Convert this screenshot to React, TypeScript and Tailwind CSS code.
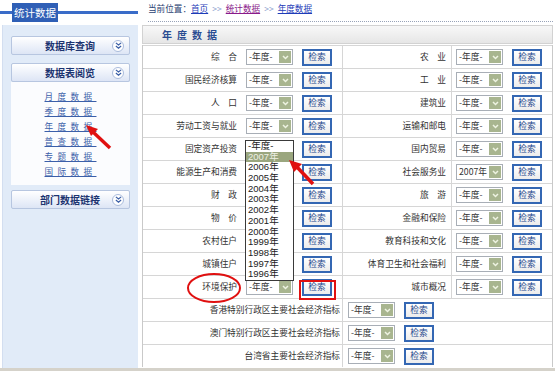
import React from 'react';

const CJK = { fontFamily: '"Noto Sans CJK SC", "Liberation Sans", sans-serif' };

type Row = { label: string; value?: string };

const LEFT: Row[] = [
  { label: '综　合' },
  { label: '国民经济核算' },
  { label: '人　口' },
  { label: '劳动工资与就业' },
  { label: '固定资产投资' },
  { label: '能源生产和消费' },
  { label: '财　政' },
  { label: '物　价' },
  { label: '农村住户' },
  { label: '城镇住户' },
  { label: '环境保护' },
];

const RIGHT: Row[] = [
  { label: '农　业' },
  { label: '工　业' },
  { label: '建筑业' },
  { label: '运输和邮电' },
  { label: '国内贸易' },
  { label: '社会服务业', value: '2007年' },
  { label: '旅　游' },
  { label: '金融和保险' },
  { label: '教育科技和文化' },
  { label: '体育卫生和社会福利' },
  { label: '城市概况' },
];

const WIDE = ['香港特别行政区主要社会经济指标', '澳门特别行政区主要社会经济指标', '台湾省主要社会经济指标'];

const YEARS = ['-年度-', '2007年', '2006年', '2005年', '2004年', '2003年', '2002年', '2001年', '2000年', '1999年', '1998年', '1997年', '1996年'];

const LINKS = ['月度数据', '季度数据', '年度数据', '普查数据', '专题数据', '国际数据'];

function Chevrons() {
  return (
    <span className="flex h-[12px] w-[12px] items-center justify-center rounded-full border border-[#a9bbdc] bg-white">
      <svg width="7" height="7" viewBox="0 0 8 8" fill="none" stroke="#3a5ea6" strokeWidth="1.4">
        <path d="M1 1l3 2.5L7 1" />
        <path d="M1 4.5l3 2.5L7 4.5" />
      </svg>
    </span>
  );
}

function SideBox({ title }: { title: string }) {
  return (
    <div className="flex h-[19px] items-center rounded-[2px] border border-[#b7c6e0] bg-gradient-to-b from-white to-[#dde5f5]">
      <span className="ml-[4px] w-[12px]" />
      <span className="flex-1 text-center text-[10px] font-bold text-[#1c3470]">{title}</span>
      <span className="mr-[5px]">
        <Chevrons />
      </span>
    </div>
  );
}

function YearSelect({ value = '-年度-', hidden }: { value?: string; hidden?: boolean }) {
  return (
    <div className={`flex h-[16px] w-[47px] items-center border border-[#a8aeb6] bg-white ${hidden ? 'invisible' : ''}`}>
      <span className="flex-1 pl-[2px] text-[8.7px] leading-none text-[#333]">{value}</span>
      <span className="mr-[1px] flex h-[12px] w-[12px] items-center justify-center bg-[#a8b58f]">
        <svg width="7" height="5" viewBox="0 0 7 5" fill="none" stroke="#eef3e2" strokeWidth="1.5">
          <path d="M1 1l2.5 2.5L6 1" />
        </svg>
      </span>
    </div>
  );
}

function SearchButton() {
  return (
    <div className="flex h-[17px] w-[30px] items-center justify-center border-2 border-[#3467b3] bg-gradient-to-b from-white to-[#ececec] text-[8.7px] text-[#23458a]">
      检索
    </div>
  );
}

function Picker({ value, covered }: { value?: string; covered?: boolean }) {
  return (
    <div className="flex items-center gap-[9px]">
      <YearSelect value={value} hidden={covered} />
      <SearchButton />
    </div>
  );
}

export default function App() {
  return (
    <div className="relative flex h-[371px] w-[555px] flex-col overflow-hidden bg-white" style={CJK}>
      <div className="flex h-[368px]">
        {/* Sidebar */}
        <aside className="flex w-[138px] flex-col">
          <div className="flex h-[25px] items-center">
            <div className="h-[3px] w-[12px] bg-[#3a6cc8]" />
            <div className="flex h-[19px] items-center bg-[#2f5fb6] px-[2px] text-[10.5px] text-white">统计数据</div>
            <div className="h-[3px] flex-1 bg-[#3a6cc8]" />
          </div>
          <div className="ml-[2px] flex flex-1 flex-col border-l border-[#d3def0] bg-[#e1ebf8] px-[8px] pt-[11px]">
            <SideBox title="数据库查询" />
            <div className="mt-[8px]">
              <SideBox title="数据表阅览" />
            </div>
            <div className="flex h-[103px] flex-col items-center bg-[#fbfcfe] pt-[7px]">
              {LINKS.map((l) => (
                <span key={l} className="h-[15px] text-[8.6px] leading-[15px] tracking-[4.4px] text-[#3b5fa9] underline">
                  {l}
                </span>
              ))}
            </div>
            <div className="mt-[5px]">
              <SideBox title="部门数据链接" />
            </div>
          </div>
        </aside>

        {/* Main */}
        <main className="ml-[4px] flex w-[411px] flex-col">
          <div className="flex h-[17px] items-center pl-[6px] text-[8.6px] text-[#2a3f72]">
            <span>当前位置：</span>
            <span className="text-[#1e3cb8] underline">首页</span>
            <span className="px-[4px] text-[#8aa0cc]">&gt;&gt;</span>
            <span className="text-[#8a1a8a] underline">统计数据</span>
            <span className="px-[4px] text-[#8aa0cc]">&gt;&gt;</span>
            <span className="text-[#1e3cb8] underline">年度数据</span>
          </div>
          <div className="ml-[6px] mt-[4px] border-t border-dotted border-[#98a3b8]" />
          <div className="mt-[3px] flex h-[19px] items-center border border-[#d2d2d2] bg-gradient-to-b from-[#f8f8f8] to-[#e6e6e6] pl-[19px] text-[10px] font-bold tracking-[5px] text-[#2a4c92]">
            年度数据
          </div>

          <div className="mt-[1px] flex flex-col border-x border-[#c9c9c9] text-[8.7px] text-[#333]">
            {LEFT.map((l, i) => (
              <div key={l.label} className="flex h-[23px] border-t border-[#d6d6d6]">
                <div className="flex w-[99px] items-center justify-end pr-[5px]">{l.label}</div>
                <div className="flex w-[100px] items-center pl-[4px]">
                  {/* rows 5-10 sit under the open year list */}
                  <Picker covered={i >= 4 && i <= 9} />
                </div>
                <div className="flex w-[109px] items-center justify-end border-l border-[#d6d6d6] pr-[5px]">{RIGHT[i].label}</div>
                <div className="flex flex-1 items-center border-l border-[#d6d6d6] pl-[4px]">
                  <Picker value={RIGHT[i].value} />
                </div>
              </div>
            ))}
            {WIDE.map((w) => (
              <div key={w} className="flex h-[23px] border-t border-[#d6d6d6]">
                <div className="flex w-[199px] items-center justify-end pr-[2px]">{w}</div>
                <div className="flex flex-1 items-center border-l border-[#d6d6d6] pl-[5px]">
                  <Picker />
                </div>
              </div>
            ))}
          </div>
        </main>
      </div>
      <div className="h-[3px] bg-[#d5d2ca]" />

      {/* open year list */}
      <div className="absolute left-[245px] top-[140px] flex w-[49px] flex-col border border-[#3a3a3a] bg-white">
        {YEARS.map((y, i) => (
          <span
            key={y}
            className={
              i === 1
                ? 'h-[10.7px] bg-[#9aa67e] pl-[2px] text-[9.5px] leading-[10.7px] text-[#eef0e4]'
                : 'h-[10.7px] pl-[2px] text-[9.5px] leading-[10.7px] text-[#222]'
            }
            style={{ fontFamily: '"Liberation Sans", "Noto Sans CJK SC", sans-serif' }}
          >
            {y}
          </span>
        ))}
      </div>

      {/* annotations */}
      <div className="absolute left-[299px] top-[280px] h-[20px] w-[37px] border-2 border-[#e01010]" />
      <svg className="pointer-events-none absolute left-0 top-0" width="555" height="371">
        <ellipse cx="214" cy="288" rx="26" ry="14" fill="none" stroke="#e01010" strokeWidth="2" />
        <line x1="110" y1="148" x2="93" y2="132" stroke="#e01010" strokeWidth="3.5" />
        <polygon points="86,125 98,129 91,136" fill="#e01010" />
        <line x1="313" y1="184" x2="297" y2="167" stroke="#e01010" strokeWidth="3.5" />
        <polygon points="289,160 302,164 294,172" fill="#e01010" />
      </svg>
    </div>
  );
}
